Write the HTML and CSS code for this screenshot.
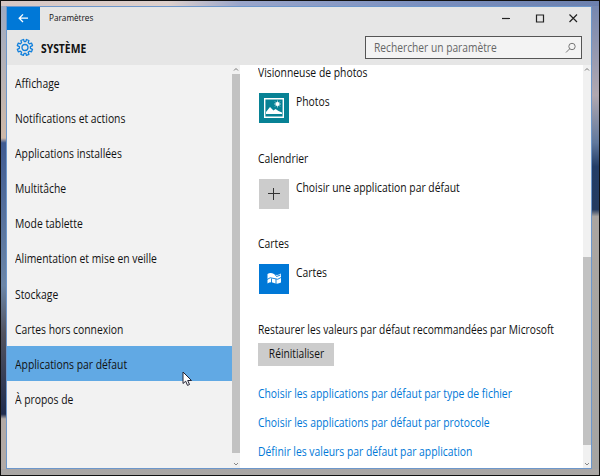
FILE: index.html
```html
<!DOCTYPE html>
<html lang="fr">
<head>
<meta charset="utf-8">
<title>Paramètres</title>
<link rel="stylesheet" href="styles.css">
</head>
<body>
<div class="window">
  <header class="header">
    <div class="titlebar">
      <div class="back"><svg width="33" height="23" viewBox="0 0 33 23"><path d="M12.5 11.2H21M16 7.4l-3.8 3.8 3.8 3.8" fill="none" stroke="#fff" stroke-width="1.3"/></svg></div>
      <div class="caption"><span class="text">Paramètres</span></div>
      <svg class="controls" width="90" height="20" viewBox="0 0 90 20"><g fill="none" stroke="#222" stroke-width="1.2"><path d="M3 11.5h8"/><path d="M37.500 8h7v7h-7z"/><path d="M70.500 7.500l7.500 7.500m0-7.500l-7.500 7.500"/></g></svg>
    </div>
    <div class="toolbar">
      <svg class="gear" width="20" height="20" viewBox="0 0 20 20"><g fill="none" stroke="#1280dc" stroke-width="1.300" stroke-linejoin="round"><path d="M8.400 1.500h.2l.6 2.200h1.600l.6-2.200 2.500 1-.7 2.100 1.200 1.200 2.100-.7 1 2.500-2.100 1.100v1.600l2.100 1-1 2.500-2.100-.7-1.200 1.200.7 2.100-2.500 1-.6-2.100H9.200l-.8 2.100-2.500-1 .7-2.100-1.200-1.200-2.100.7-1-2.500 2.100-1V8.700L2.300 7.600l1-2.500 2.100.7 1.200-1.200-.7-2.100z"/><circle cx="10" cy="9.500" r="3"/></g></svg>
      <h1 class="heading"><span class="text">SYSTÈME</span></h1>
      <div class="search"><span class="text">Rechercher un paramètre</span><svg width="12" height="12" viewBox="0 0 12 12"><g fill="none" stroke="#777"><circle cx="7" cy="4.500" r="3.200"/><path d="M4.700 6.800L1 10.500"/></g></svg></div>
    </div>
  </header>
  <div class="body">
    <nav class="nav">
      <a class="item"><span class="text">Affichage</span></a>
      <a class="item"><span class="text">Notifications et actions</span></a>
      <a class="item"><span class="text">Applications installées</span></a>
      <a class="item"><span class="text">Multitâche</span></a>
      <a class="item"><span class="text">Mode tablette</span></a>
      <a class="item"><span class="text">Alimentation et mise en veille</span></a>
      <a class="item"><span class="text">Stockage</span></a>
      <a class="item"><span class="text">Cartes hors connexion</span></a>
      <a class="item selected"><span class="text">Applications par défaut</span></a>
      <a class="item"><span class="text">À propos de</span></a>
    </nav>
    <div class="scroll scroll-nav"><svg width="8" height="8" viewBox="0 0 8 8"><path d="M2 5.500l2-2 2 2" fill="none" stroke="#777"/></svg><div class="thumb"></div><svg width="8" height="8" viewBox="0 0 8 8"><path d="M2 3l2 2 2-2" fill="none" stroke="#888"/></svg></div>
    <main class="content">
      <section class="group">
        <h2 class="label"><span class="text">Visionneuse de photos</span></h2>
        <div class="app"><svg width="30" height="30" viewBox="0 0 30 30"><path fill="#078295" d="M0 0h30v30H0z"/><path d="M5.700 5.700h18.600v18.600H5.700z" fill="none" stroke="#fff" stroke-width="1.400"/><path d="M7 21v-2l4-5 3.500 3.500L16.500 16l3 2 3.500 1.500V21z" fill="#fff"/><circle cx="18.500" cy="11" r="2" fill="#fff"/><path d="M18.500 7.500v7M15 11h7M16 8.500l5 5M21 8.500l-5 5" stroke="#fff" stroke-width=".6"/></svg><span class="text">Photos</span></div>
      </section>
      <section class="group">
        <h2 class="label"><span class="text">Calendrier</span></h2>
        <div class="app"><svg width="30" height="30" viewBox="0 0 30 30"><path fill="#ccc" d="M0 0h30v30H0z"/><path d="M9 14.500h12M14.500 9v12" stroke="#333"/></svg><span class="text">Choisir une application par défaut</span></div>
      </section>
      <section class="group">
        <h2 class="label"><span class="text">Cartes</span></h2>
        <div class="app"><svg width="30" height="30" viewBox="0 0 30 30"><path fill="#0078d7" d="M0 0h30v30H0z"/><path d="M8.500 10q3-2 6.500 0t7-.5v9q-3.500 2-7 .5t-6.500.5z" fill="#fff"/><path d="M8 15.500q3-3 7-1t7-1M12.500 14.500v6M17 15v5M15.500 9.500l2 3 4-1.500" fill="none" stroke="#0078d7" stroke-width=".9"/></svg><span class="text">Cartes</span></div>
      </section>
      <section class="reset">
        <p class="restore"><span class="text">Restaurer les valeurs par défaut recommandées par Microsoft</span></p>
        <button class="button"><span class="text">Réinitialiser</span></button>
      </section>
      <div class="links">
        <a><span class="text">Choisir les applications par défaut par type de fichier</span></a>
        <a><span class="text">Choisir les applications par défaut par protocole</span></a>
        <a><span class="text">Définir les valeurs par défaut par application</span></a>
      </div>
    </main>
    <div class="scroll scroll-main"><svg width="8" height="8" viewBox="0 0 8 8"><path d="M2 5.500l2-2 2 2" fill="none" stroke="#777"/></svg><div class="thumb"></div><svg width="8" height="8" viewBox="0 0 8 8"><path d="M2 3l2 2 2-2" fill="none" stroke="#888"/></svg></div>
  </div>
</div>
<svg class="pointer" width="12" height="17" viewBox="0 0 12 17"><path d="M1 1v11.500l2.700-2.300 1.800 4.200 2-.9-1.800-4H9.500z" fill="#fff" stroke="#223" stroke-width="1"/></svg>
</body>
</html>
```
FILE: styles.css
```css
* { box-sizing: border-box; }
body {
  margin: 0;
  width: 600px;
  height: 476px;
  padding: 5px 7px 6px 5px;
  border: 1px solid #111;
  overflow: hidden;
  font: 12px/16px "Open Sans", "Noto Sans", sans-serif;
  color: #111;
  background:
    linear-gradient(90deg, #d6c6c4, #ddd0cc 28%, #9aa6cb 40%, #7b90c0 70%, #6c80ae) 0 0 / 100% 6px no-repeat,
    linear-gradient(#a8a5a5, #aaa7a4) 0 100% / 100% 7px no-repeat,
    linear-gradient(#9caac4, #cfb9a8 29%, #405b91 30%, #6c86a7 60%, #52535f 70%, #202d4e 87%, #b2aaa6 88%) 0 0 / 7px 100% no-repeat,
    linear-gradient(#7285b0, #b1a8b0 20%, #60789d 30%, #233d67 35%, #243b60 44%, #aaa5a1 45.5%, #a5a4a2) 100% 0 / 9px 100% no-repeat #a8a5a2;
}
/* Narrows the type to the proportions of the system font. */
.text { display: inline-block; white-space: nowrap; transform: scaleX(.863); transform-origin: 0 50%; }
.window { height: 463px; width: 586px; display: flex; flex-direction: column; border: 1px solid #6d97cb; background: #fff; }
.header { height: 58px; flex: none; background: #e6e6e6; }
.titlebar { height: 22px; display: flex; align-items: flex-start; }
.back { width: 33px; height: 23px; background: #0078d7; }
.back svg, .app svg { display: block; }
.caption { flex: 1; padding: 3px 0 0 9px; font-size: 9.5px; }
.controls { margin-right: 2px; }
.toolbar { display: flex; align-items: center; height: 36px; padding: 0 9px 0 8px; }
.gear { margin-top: 2px; }
.heading { flex: 1; margin: 3px 0 0 6px; font-size: 12px; font-weight: 700; }
.search { width: 217px; height: 23px; margin-top: 1px; display: flex; align-items: center; justify-content: space-between; padding: 0 4px 0 8px; border: 1px solid #555; color: #666; background: #f3f3f3; }
.search .text, .restore .text { transform: scaleX(.853); }
.body { flex: 1; min-height: 0; display: flex; }
.nav { width: 225px; flex: none; background: #f2f2f2; }
.item { display: block; height: 35.1px; padding: 11px 0 0 8px; }
.selected { background: #61a9e4; }
.scroll { width: 8px; flex: none; display: flex; flex-direction: column; background: #f1f1f1; }
.scroll svg { flex: none; }
.thumb { flex: none; background: #c2c2c2; }
.scroll-nav .thumb { height: 379px; margin: 1px 0 7px; }
.scroll-main .thumb { height: 188px; margin: 184px 0 15px; }
.content { flex: 1; min-width: 0; padding-left: 18px; }
.group { height: 85.500px; }
.label, .restore { height: 16px; margin: 0; font-size: 12px; font-weight: 400; }
.app { display: flex; gap: 7px; margin: 12px 0 0 1px; }
.app .text { padding-top: 1px; }
.button { display: block; width: 76px; height: 23px; margin-top: 5px; padding: 0; border: 0; background: #ccc; font: inherit; color: inherit; }
.button .text { transform: scaleX(.85); transform-origin: 50% 50%; }
.links { margin-top: 20px; display: grid; grid-auto-rows: 16px; gap: 13px; color: #0078d7; }
.pointer { position: absolute; left: 182px; top: 371px; }
```
